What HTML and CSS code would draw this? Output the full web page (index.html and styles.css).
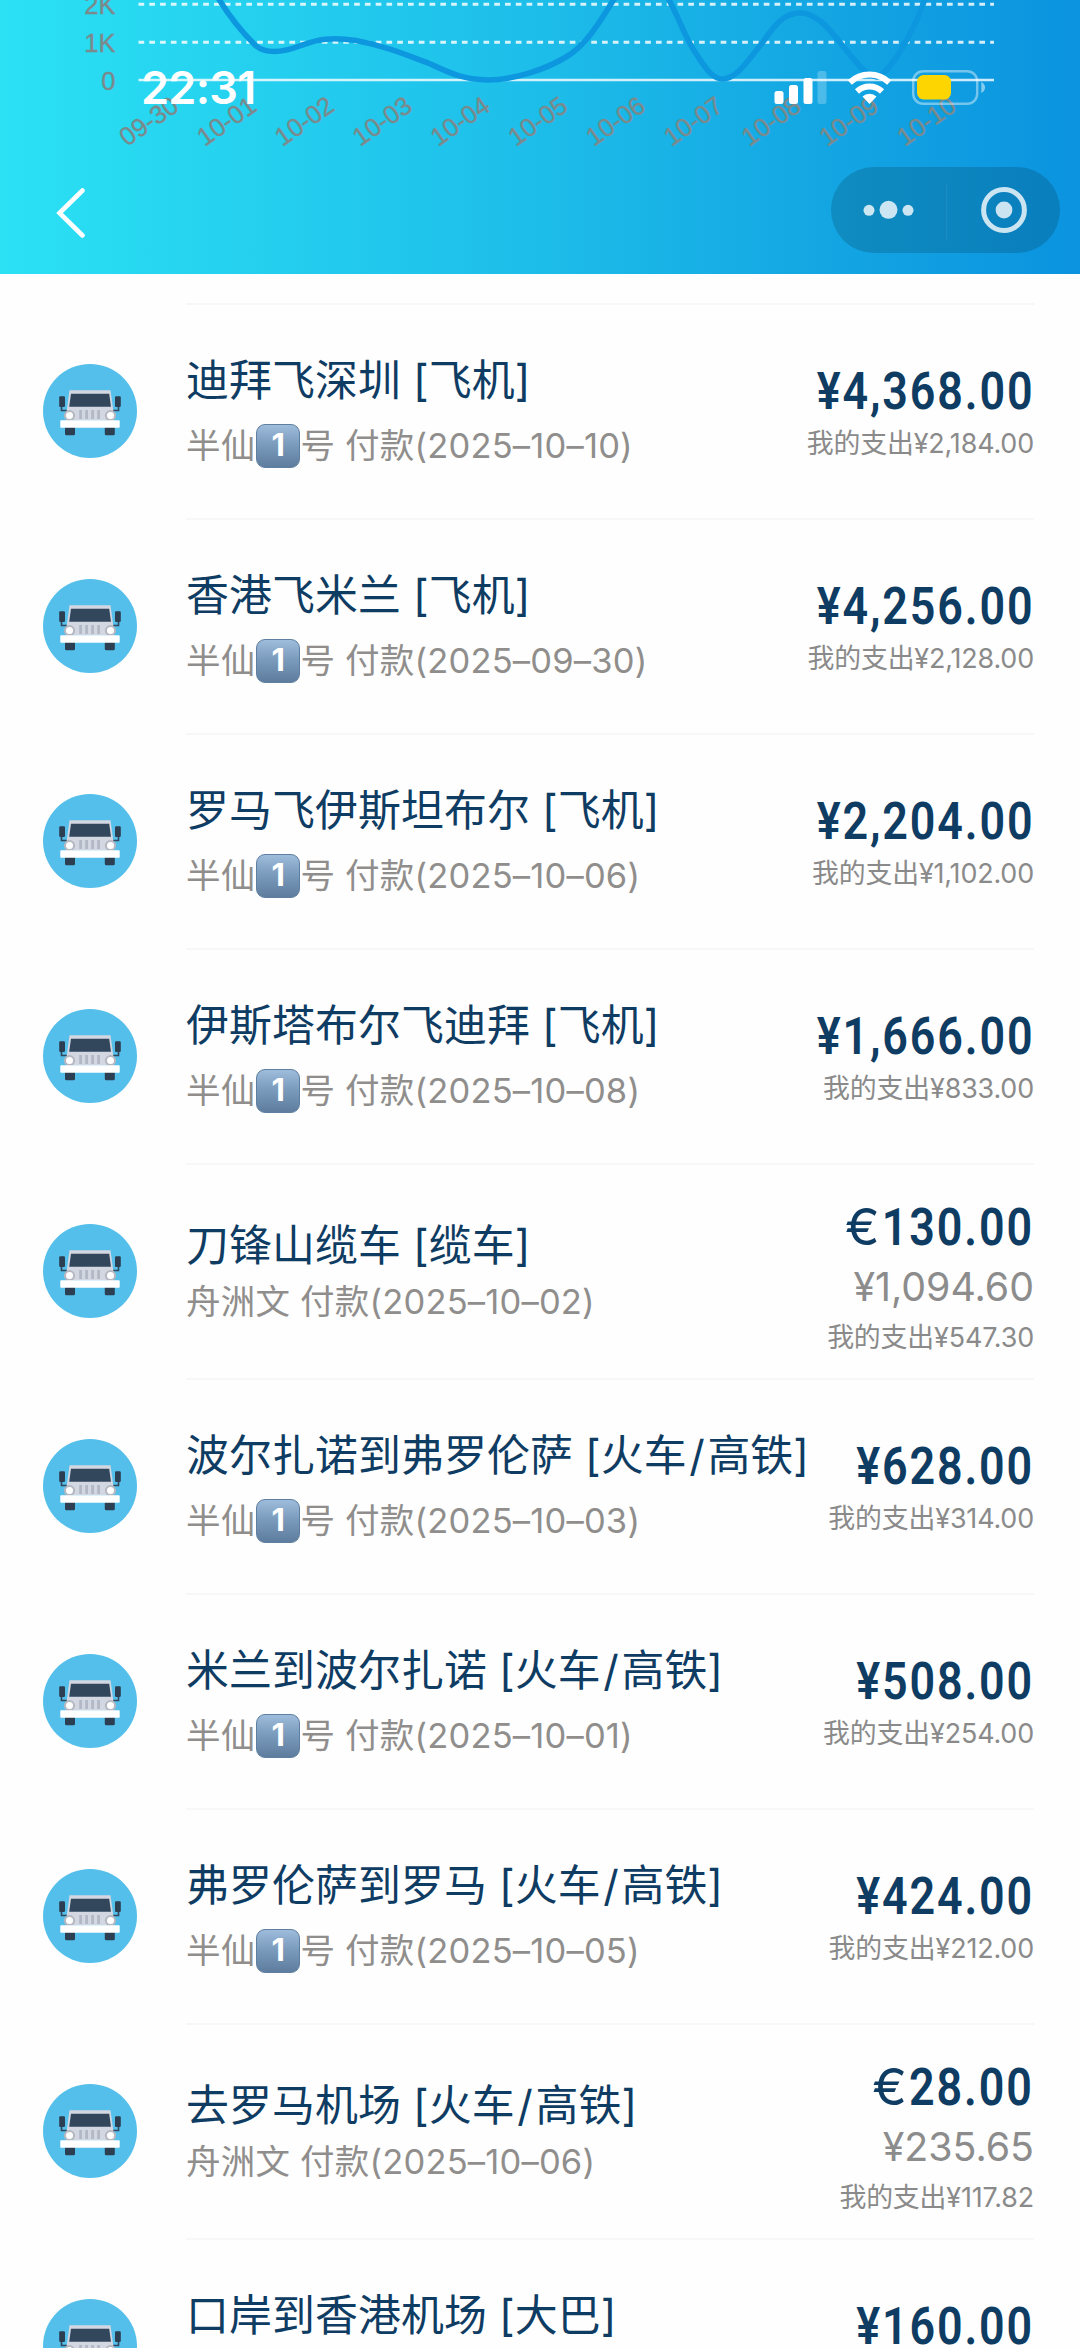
FILE: index.html
```html
<!DOCTYPE html>
<html lang="zh-CN">
<head>
<meta charset="utf-8">
<title>账单明细</title>
<link rel="stylesheet" href="styles.css">
</head>
<body>
<svg class="sprite" aria-hidden="true">
  <symbol id="jeep" viewBox="0 0 94 94">
    <circle cx="47" cy="47" r="47" fill="#54bfea"/>
    <path d="M18.5 42v4.5h7M75.500 42v4.500h-7" fill="none" stroke="#32465c" stroke-width="1.600"/>
    <rect x="16.200" y="32.300" width="5.800" height="10.600" rx="1.200" fill="#2b3e52"/>
    <rect x="72" y="32.300" width="5.800" height="10.600" rx="1.200" fill="#2b3e52"/>
    <path d="M26.500 26.300h41l3 22v8h-47v-8z" fill="#d3d7e1"/>
    <path d="M28 29.800h38.200l1.800 13H26.200z" fill="#32465c"/>
    <path d="M37.600 46v9M43.600 46v9M49.600 46v9M55.600 46v9" stroke="#b2b8c6" stroke-width="2.800"/>
    <circle cx="26.500" cy="51.600" r="5.600" fill="#b5b8c0"/>
    <circle cx="67.500" cy="51.600" r="5.600" fill="#b5b8c0"/>
    <circle cx="26.500" cy="51.600" r="3.500" fill="#fff"/>
    <circle cx="67.500" cy="51.600" r="3.500" fill="#fff"/>
    <rect x="22" y="62" width="10" height="9.200" rx="1.500" fill="#2b3e52"/>
    <rect x="61.800" y="62" width="10" height="9.200" rx="1.500" fill="#2b3e52"/>
    <rect x="17.300" y="56.200" width="59.400" height="7.600" rx=".8" fill="#fff"/>
  </symbol>
</svg>

<header class="header">
  <svg class="chart" viewBox="0 0 1080 274">
    <g class="grid">
      <path d="M138.500 4.300H994M138.500 42.300H994"/>
    </g>
    <path class="axis" d="M138.500 80H994"/>
    <path class="curve" d="M217 -4C230 18 246 36 255 45C266 55 284 52 301 45.500C318 39.500 330 36.500 356 40.500C385 46 404 54 427 62.500C450 73 462 79.500 488 80C512 80 545 70 566 57C588 44 602 18 616 -4M667 -4C682 24 686 40 697 55C708 73 715 79 722.500 79C737 79 748 60 763 42C776 23 785 13 800 13C816 13 828 27 842 45C856 62 864 74 877 77C887 75 912 38 926 -4"/>
    <g class="ylabels">
      <text x="115.500" y="13.500">2K</text>
      <text x="115.500" y="51.500">1K</text>
      <text x="115.500" y="89.500">0</text>
    </g>
    <g class="xlabels">
      <text transform="translate(180.500 109.500) rotate(-35)">09-30</text>
      <text transform="translate(258.300 109.500) rotate(-35)">10-01</text>
      <text transform="translate(336 109.500) rotate(-35)">10-02</text>
      <text transform="translate(413.800 109.500) rotate(-35)">10-03</text>
      <text transform="translate(491.600 109.500) rotate(-35)">10-04</text>
      <text transform="translate(569.400 109.500) rotate(-35)">10-05</text>
      <text transform="translate(647.100 109.500) rotate(-35)">10-06</text>
      <text transform="translate(724.900 109.500) rotate(-35)">10-07</text>
      <text transform="translate(802.700 109.500) rotate(-35)">10-08</text>
      <text transform="translate(880.400 109.500) rotate(-35)">10-09</text>
      <text transform="translate(958.200 109.500) rotate(-35)">10-10</text>
    </g>
  </svg>
  <div class="status">
    <span class="time">22:31</span>
    <svg class="indicators" width="212" height="36" viewBox="774 70 212 36">
      <g fill="#fff">
        <rect x="774.500" y="91" width="9" height="13" rx="2.500"/>
        <rect x="789" y="85" width="9" height="19" rx="2.500"/>
        <rect x="803.500" y="78" width="9" height="26" rx="2.500"/>
        <rect x="817.500" y="71" width="9" height="33" rx="2.500" opacity=".24"/>
        <path d="M869.500 104l-7-7.500a10 10 0 0 1 14 0z"/>
      </g>
      <path d="M857 91.500a18 18 0 0 1 25 0M849.800 82.500a28.500 28.500 0 0 1 39.400 0" fill="none" stroke="#fff" stroke-width="6"/>
      <rect x="913.200" y="71.300" width="64" height="32.500" rx="10" fill="none" stroke="#fff" stroke-opacity=".42" stroke-width="2.500"/>
      <rect x="917" y="75" width="34" height="24.500" rx="6.500" fill="#fdd500"/>
      <path d="M981.300 82c5 2.500 5 8.500 0 11z" fill="#fff" opacity=".5"/>
    </svg>
  </div>
  <nav class="nav">
    <svg class="back" width="30" height="52" viewBox="0 0 30 52"><path d="M27.500 3.500L4.500 26l23 22.500" fill="none" stroke="#fff" stroke-width="4.600" stroke-linecap="round"/></svg>
    <div class="capsule">
      <svg width="229" height="86" viewBox="831 167 229 86">
        <g fill="#fff" fill-opacity=".79">
          <circle cx="869" cy="210.300" r="5.500"/><circle cx="888.500" cy="209.800" r="9"/><circle cx="908" cy="210.300" r="5.500"/>
          <circle cx="1004" cy="210" r="8.400"/>
        </g>
        <circle cx="1004" cy="210" r="20.400" fill="none" stroke="#fff" stroke-opacity=".79" stroke-width="5"/>
        <path d="M946.500 184v56" stroke="#fff" stroke-opacity=".06" stroke-width="1.500"/>
      </svg>
    </div>
  </nav>
</header>

<main class="list">
  <article class="row">
    <svg class="icon"><use href="#jeep"/></svg>
    <div class="info"><h2>迪拜飞深圳 [飞机]</h2><p>半仙<i class="key">1</i>号 付款(2025–10–10)</p></div>
    <div class="money"><strong>¥4,368.00</strong><small>我的支出¥2,184.00</small></div>
  </article>
  <article class="row">
    <svg class="icon"><use href="#jeep"/></svg>
    <div class="info"><h2>香港飞米兰 [飞机]</h2><p>半仙<i class="key">1</i>号 付款(2025–09–30)</p></div>
    <div class="money"><strong>¥4,256.00</strong><small>我的支出¥2,128.00</small></div>
  </article>
  <article class="row">
    <svg class="icon"><use href="#jeep"/></svg>
    <div class="info"><h2>罗马飞伊斯坦布尔 [飞机]</h2><p>半仙<i class="key">1</i>号 付款(2025–10–06)</p></div>
    <div class="money"><strong>¥2,204.00</strong><small>我的支出¥1,102.00</small></div>
  </article>
  <article class="row">
    <svg class="icon"><use href="#jeep"/></svg>
    <div class="info"><h2>伊斯塔布尔飞迪拜 [飞机]</h2><p>半仙<i class="key">1</i>号 付款(2025–10–08)</p></div>
    <div class="money"><strong>¥1,666.00</strong><small>我的支出¥833.00</small></div>
  </article>
  <article class="row foreign">
    <svg class="icon"><use href="#jeep"/></svg>
    <div class="info"><h2>刀锋山缆车 [缆车]</h2><p>舟洲文 付款(2025–10–02)</p></div>
    <div class="money"><strong><span class="euro">€</span>130.00</strong><span class="converted">¥1,094.60</span><small>我的支出¥547.30</small></div>
  </article>
  <article class="row">
    <svg class="icon"><use href="#jeep"/></svg>
    <div class="info"><h2>波尔扎诺到弗罗伦萨 [火车<span class="slash">/</span>高铁]</h2><p>半仙<i class="key">1</i>号 付款(2025–10–03)</p></div>
    <div class="money"><strong>¥628.00</strong><small>我的支出¥314.00</small></div>
  </article>
  <article class="row">
    <svg class="icon"><use href="#jeep"/></svg>
    <div class="info"><h2>米兰到波尔扎诺 [火车<span class="slash">/</span>高铁]</h2><p>半仙<i class="key">1</i>号 付款(2025–10–01)</p></div>
    <div class="money"><strong>¥508.00</strong><small>我的支出¥254.00</small></div>
  </article>
  <article class="row">
    <svg class="icon"><use href="#jeep"/></svg>
    <div class="info"><h2>弗罗伦萨到罗马 [火车<span class="slash">/</span>高铁]</h2><p>半仙<i class="key">1</i>号 付款(2025–10–05)</p></div>
    <div class="money"><strong>¥424.00</strong><small>我的支出¥212.00</small></div>
  </article>
  <article class="row foreign">
    <svg class="icon"><use href="#jeep"/></svg>
    <div class="info"><h2>去罗马机场 [火车<span class="slash">/</span>高铁]</h2><p>舟洲文 付款(2025–10–06)</p></div>
    <div class="money"><strong><span class="euro">€</span>28.00</strong><span class="converted">¥235.65</span><small>我的支出¥117.82</small></div>
  </article>
  <article class="row">
    <svg class="icon"><use href="#jeep"/></svg>
    <div class="info"><h2>口岸到香港机场 [大巴]</h2></div>
    <div class="money"><strong>¥160.00</strong></div>
  </article>
</main>
</body>
</html>
```
FILE: styles.css
```css
* { box-sizing: border-box; }

body {
  margin: 0;
  height: 2348px;
  overflow: hidden;
  background: #fefefe;
  font-family: Inter, "Noto Sans CJK SC", sans-serif;
}

.sprite { display: none; }

.header {
  position: relative;
  height: 274px;
  padding-top: 62px;
  background: linear-gradient(90deg, #2be1f4 0%, #1dbde9 50%, #14a7e3 75%, #0b93df 100%);
  overflow: hidden;
}

.chart {
  position: absolute;
  inset: 0;
  width: 1080px;
  height: 274px;
}
.grid { stroke: #fff; stroke-opacity: .82; stroke-width: 3; stroke-dasharray: 5.7 5.08; }
.axis { stroke: #fff; stroke-opacity: .8; stroke-width: 2.6; }
.curve { fill: none; stroke: #0c97df; stroke-width: 5.6; }
.chart text {
  font: 25.5px "Liberation Sans", Arial, sans-serif;
  fill: #7b8a8d;
  stroke: #7b8a8d;
  stroke-width: .4px;
  text-anchor: end;
}

.status {
  position: relative;
  display: flex;
  justify-content: space-between;
  align-items: center;
  height: 52px;
  padding: 0 94px 0 141px;
}
.time {
  color: #fff;
  font-size: 45px;
  font-weight: 600;
  line-height: 52px;
  letter-spacing: -.7px;
}

.nav {
  position: relative;
  display: flex;
  justify-content: space-between;
  align-items: center;
  height: 86px;
  margin-top: 53px;
  padding: 0 20px 0 55px;
}
.back { margin-top: 5px; }
.capsule {
  width: 229px;
  height: 86px;
  border-radius: 43px;
  background: rgba(0, 25, 40, .18);
}
.capsule svg { display: block; }

.list { padding-top: 29px; }

.row {
  display: flex;
  height: 215px;
  padding: 0 46px 0 43px;
}
.icon {
  flex: none;
  width: 94px;
  height: 94px;
  margin: 61px 49px 0 0;
}
.info, .money {
  border-top: 2px solid #f7f7f7;
  white-space: nowrap;
}
.info { flex: 1; padding-top: 45px; }
.money {
  display: flex;
  flex-direction: column;
  align-items: flex-end;
  padding-top: 62px;
}

h2 {
  margin: 0;
  color: #0f3c63;
  font-size: 42.9px;
  font-weight: 400;
  line-height: 60px;
  letter-spacing: .1px;
}
.slash { padding: 0 2.5px; }
p {
  display: flex;
  align-items: center;
  margin: 10.5px 0 0;
  color: #908e8c;
  font-size: 34.5px;
  font-weight: 400;
  line-height: 50px;
  letter-spacing: .2px;
  white-space: pre;
}
.key {
  flex: none;
  width: 44px;
  height: 44px;
  margin: 1px 0 0 1px;
  border: 1.5px solid #5e7f9f;
  border-radius: 9px;
  background: linear-gradient(#9ebcdc, #7c9cbd 45%, #5e7d9e);
  color: #fff;
  font: 700 31px/40px Inter, sans-serif;
  text-align: center;
}

strong {
  height: 50px;
  color: #0f3c63;
  font: 600 51px/50px Roboto, sans-serif;
  letter-spacing: 2.1px;
  transform: scaleX(.88);
  transform-origin: right;
}
.euro {
  display: inline-block;
  margin-right: 3px;
  font: 400 51px/50px Inter, sans-serif;
  transform: scaleX(1.16);
}
.converted {
  margin-top: 12px;
  color: #8c8c8c;
  font-size: 39.3px;
  font-weight: 400;
  line-height: 46px;
}
small {
  margin-top: 8px;
  color: #8a8a8a;
  font-size: 26.9px;
  font-weight: 400;
  line-height: 36px;
  letter-spacing: -.15px;
}

.foreign .info { padding-top: 50px; }
.foreign p { margin-top: 2px; }
.foreign .money { padding-top: 37px; }
.foreign small { margin-top: 9px; }
```
